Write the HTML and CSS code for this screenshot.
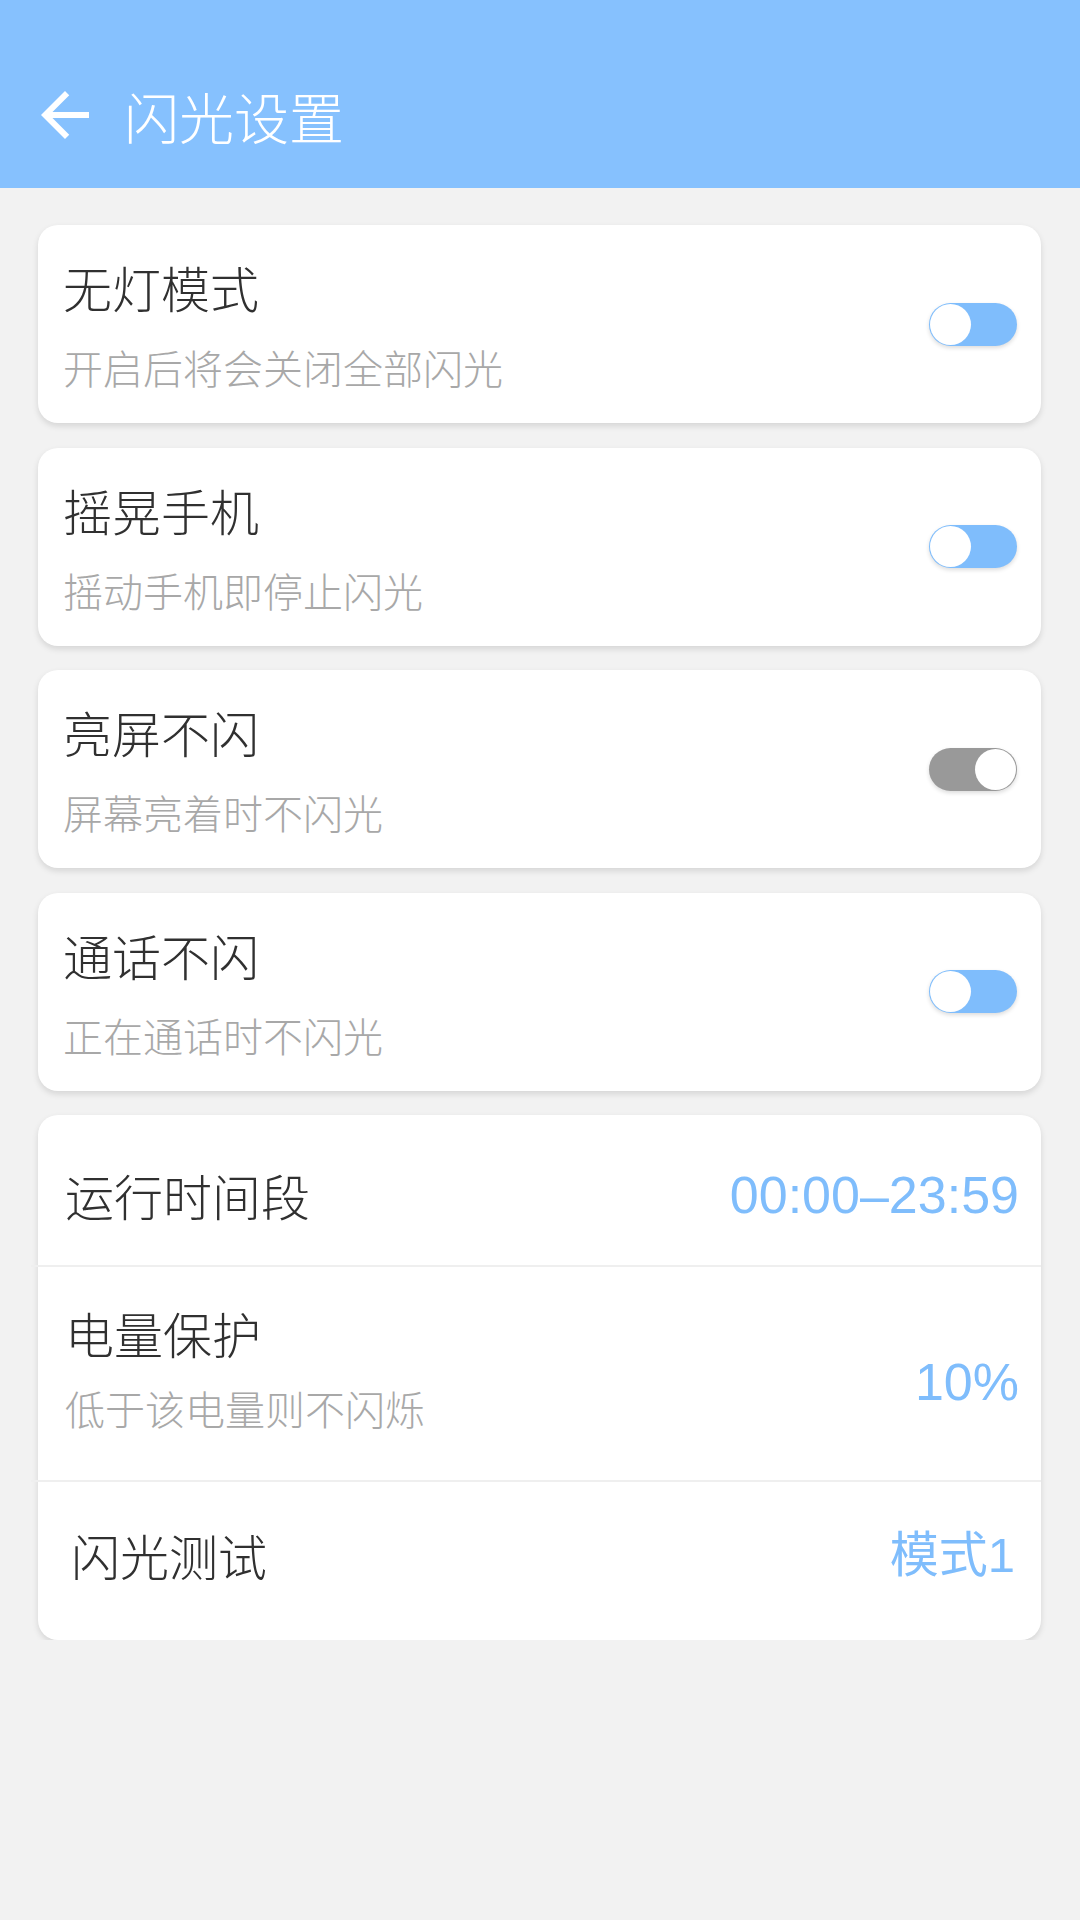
FILE: index.html
```html
<!DOCTYPE html>
<html lang="zh-CN">
<head>
    <meta charset="UTF-8">
    <meta name="viewport" content="width=device-width, initial-scale=1.0">
    <title>闪光设置</title>
    <link rel="stylesheet" href="styles.css">
</head>
<body>
    <header class="toolbar">
        <svg class="back" viewBox="0 0 24 24" aria-hidden="true">
            <path d="M20 11H7.83l5.59-5.59L12 4l-8 8 8 8 1.41-1.41L7.83 13H20v-2z"/>
        </svg>
        <h1 class="title">闪光设置</h1>
    </header>

    <main class="list">
        <div class="card switch-card">
            <div class="text">
                <div class="label">无灯模式</div>
                <div class="desc">开启后将会关闭全部闪光</div>
            </div>
            <span class="toggle on"><span class="knob"></span></span>
        </div>

        <div class="card switch-card">
            <div class="text">
                <div class="label">摇晃手机</div>
                <div class="desc">摇动手机即停止闪光</div>
            </div>
            <span class="toggle on"><span class="knob"></span></span>
        </div>

        <div class="card switch-card">
            <div class="text">
                <div class="label">亮屏不闪</div>
                <div class="desc">屏幕亮着时不闪光</div>
            </div>
            <span class="toggle off"><span class="knob"></span></span>
        </div>

        <div class="card switch-card">
            <div class="text">
                <div class="label">通话不闪</div>
                <div class="desc">正在通话时不闪光</div>
            </div>
            <span class="toggle on"><span class="knob"></span></span>
        </div>

        <div class="card group">
            <div class="row row-time">
                <div class="label">运行时间段</div>
                <div class="value">00:00–23:59</div>
            </div>
            <div class="row row-battery">
                <div class="text">
                    <div class="label">电量保护</div>
                    <div class="desc">低于该电量则不闪烁</div>
                </div>
                <div class="value">10%</div>
            </div>
            <div class="row row-test">
                <div class="label">闪光测试</div>
                <div class="value value-mode">模式1</div>
            </div>
        </div>
    </main>
</body>
</html>
```

FILE: styles.css
```css
:root {
    --bar-color: #86c1fe;
    --accent-color: #7fbdfc;
    --text-color: #303030;
    --muted-color: #a8a8a8;
    --page-color: #f2f2f2;
    --line-color: #efefef;
    --off-color: #999;
}

body {
    margin: 0;
    background-color: var(--page-color);
    font-family: 'Noto Sans CJK SC', sans-serif;
    color: var(--text-color);
}

.toolbar {
    height: 146px;
    padding-top: 42px;
    background-color: var(--bar-color);
    display: flex;
    align-items: center;
}

.back {
    width: 72px;
    height: 72px;
    margin-left: 29px;
    fill: white;
}

.title {
    margin: 0 0 0 23px;
    font-size: 55px;
    font-weight: 300;
    line-height: 64px;
    color: white;
}

.list {
    padding: 37px 39px 0 38px;
    display: flex;
    flex-direction: column;
    gap: 24.5px;
}

.card {
    background-color: white;
    border-radius: 20px;
    box-shadow: 0 3px 6px rgba(0,0,0,0.12);
}

.switch-card {
    height: 198px;
    box-sizing: border-box;
    padding: 0 24px 0 25px;
    display: flex;
    align-items: center;
    justify-content: space-between;
}

.label {
    font-size: 49px;
    font-weight: 300;
    line-height: 62px;
}

.desc {
    margin-top: 24px;
    font-size: 40px;
    font-weight: 300;
    line-height: 50px;
    color: var(--muted-color);
}

.toggle {
    width: 88px;
    height: 43px;
    box-sizing: border-box;
    padding: 1px;
    border-radius: 22px;
    display: flex;
    box-shadow: 0 2px 4px rgba(0,0,0,0.14);
}

.toggle.on {
    background-color: var(--accent-color);
    justify-content: flex-start;
}

.toggle.off {
    background-color: var(--off-color);
    justify-content: flex-end;
}

.knob {
    width: 41px;
    height: 41px;
    border-radius: 50%;
    background-color: white;
}

.row {
    display: flex;
    align-items: center;
    justify-content: space-between;
    box-sizing: border-box;
    margin-left: -7px;
    padding: 0 22px 0 34px;
    border-bottom: 2px solid var(--line-color);
}

.row:last-child {
    border-bottom: none;
}

.row-time {
    height: 152px;
    padding-top: 9px;
}

.row-battery {
    height: 215px;
    padding-bottom: 13px;
}

.row-battery .desc {
    margin-top: 19px;
}

.row-battery .value {
    margin-top: 30px;
}

.row-test {
    height: 158px;
    padding-left: 40px;
    padding-bottom: 13px;
}

.value {
    font-family: 'Liberation Sans', 'Noto Sans CJK SC', sans-serif;
    font-size: 52px;
    line-height: 62px;
    color: var(--accent-color);
}

.value-mode {
    font-size: 49px;
    padding-right: 4px;
}
```
